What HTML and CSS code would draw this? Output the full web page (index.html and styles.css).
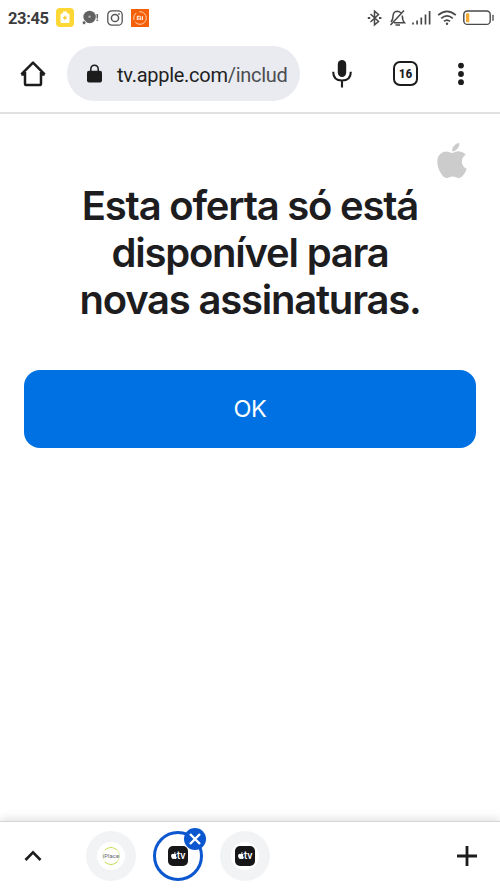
FILE: index.html
```html
<!DOCTYPE html>
<html lang="pt-BR">
<head>
    <meta charset="UTF-8">
    <meta name="viewport" content="width=device-width, initial-scale=1.0">
    <title>Apple TV</title>
    <link rel="stylesheet" href="styles.css">
</head>
<body>
    <svg class="symbols" width="0" height="0">
        <symbol id="apple" viewBox="4 32 376 448">
            <path d="M318.7 268.7c-.2-36.7 16.4-64.4 50-84.8-18.8-26.9-47.2-41.7-84.7-44.6-35.5-2.8-74.3 20.7-88.5 20.7-15 0-49.4-19.7-76.4-19.7C63.3 141.2 4 184.8 4 273.5q0 39.3 14.4 81.2c12.8 36.7 59 126.7 107.2 125.2 25.2-.6 43-17.9 75.8-17.9 31.8 0 48.3 17.9 76.4 17.9 48.6-.7 90.4-82.5 102.6-119.3-65.2-30.7-61.7-90-61.7-91.9zm-56.6-164.2c27.3-32.4 24.8-61.9 24-72.5-24.1 1.4-52 16.4-67.9 34.9-17.5 19.8-27.8 44.3-25.6 71.9 26.1 2 49.9-11.4 69.5-34.3z"/>
        </symbol>
    </svg>

    <div class="status-bar">
        <span class="clock">23:45</span>
        <div class="notifications">
            <svg width="18" height="19" viewBox="0 0 18 19">
                <rect width="18" height="19" rx="4" fill="#fdd733"/>
                <path d="M7 3.500h4v1.900h1.500q1 0 1 1v7.500q0 1-1 1h-7q-1 0-1-1V6.400q0-1 1-1H7z" fill="#fff"/>
                <path d="M9 7.800v4M7 9.800h4" stroke="#f5ca26" stroke-width="1.300"/>
            </svg>
            <svg width="17" height="16" viewBox="0 0 17 16">
                <circle cx="7.600" cy="7" r="6.200" fill="#626262"/>
                <circle cx="7.600" cy="6.800" r="1.300" fill="#aaa"/>
                <circle cx="2.100" cy="12.700" r="1.900" fill="#626262" stroke="#fff" stroke-width=".8"/>
                <path d="M15.300 4v4.400M15.300 9.600v1.500" stroke="#626262" stroke-width="1.500"/>
            </svg>
            <svg width="16" height="16" viewBox="0 0 16 16" fill="none" stroke="#555">
                <rect x=".8" y=".8" width="14.400" height="14.400" rx="4" stroke-width="1.300"/>
                <circle cx="8" cy="8" r="3.600" stroke-width="1.500"/>
                <circle cx="12" cy="4" r=".6" stroke-width=".8"/>
            </svg>
            <svg width="18" height="18" viewBox="0 0 18 18">
                <rect width="18" height="18" fill="#f45f08"/>
                <circle cx="9" cy="9" r="6.300" fill="none" stroke="#ffd4b5" stroke-width="1" stroke-dasharray="15 2 8 3"/>
                <path d="M6.300 11V7.300h2.400q1 0 1 1V11M8 8.700V11M11.400 7.200V11" fill="none" stroke="#fff" stroke-width="1"/>
            </svg>
        </div>
        <div class="system-icons">
            <svg width="16" height="18" viewBox="0 0 16 18" fill="none" stroke="#484848" stroke-width="1.500">
                <path d="M3.500 5l8 7.500L7.500 15.800V2.200l4 3.300-8 7.500"/>
                <path d="M.8 9h2.400M12 9h2.400" stroke-width="2"/>
            </svg>
            <svg width="17" height="18" viewBox="0 0 17 18" fill="none" stroke="#484848" stroke-width="1.500">
                <path d="M11.800 3.700Q10.300 2.200 8.200 2.200 4 2.500 4 7.300q0 3.200-2 5.700M5 13.700h10.500q-2.200-2.200-2.200-7.200M6.500 16h4.500M15 1.500L1.500 16"/>
            </svg>
            <svg width="19" height="16" viewBox="0 0 19 16" stroke="#484848" stroke-width="1.700">
                <path d="M1 12.500v2M5.100 10.500v4M9.300 7.500v7M13.500 4.500v10M17.600 1v13.500"/>
            </svg>
            <svg width="20" height="16" viewBox="0 0 20 16" fill="none" stroke="#484848" stroke-width="1.700">
                <path d="M1.200 5.200q8.800-7.600 17.600 0M4.200 8.400q5.800-5 11.600 0M7 11.400q3-2.600 6 0"/>
                <circle cx="10" cy="13.700" r="1.200" fill="#484848" stroke="none"/>
            </svg>
            <svg width="31" height="16" viewBox="0 0 31 16">
                <rect x=".8" y="1" width="26.400" height="13.400" rx="3.500" fill="none" stroke="#484848" stroke-width="1.400"/>
                <rect x="3" y="3.200" width="3.300" height="9" rx="1" fill="#f5ab32"/>
                <path d="M30 4.800v6" stroke="#484848" stroke-width="1.300"/>
            </svg>
        </div>
    </div>

    <header class="toolbar">
        <svg class="home" width="26" height="26" viewBox="0 0 26 26" fill="none" stroke="#1c1c1c" stroke-width="2.500" stroke-linejoin="round">
            <path d="M1.300 13.400L13 1.700l11.700 11.700M5 11v11.500q0 1.600 1.600 1.600h12.800q1.600 0 1.600-1.600V11M1.300 13.400H5M21 13.400h3.700"/>
        </svg>
        <div class="address">
            <svg width="15" height="19" viewBox="0 0 15 19">
                <path d="M3.800 8V5Q4 1.200 7.500 1.200T11.200 5v3" fill="none" stroke="#1c1c1c" stroke-width="1.500"/>
                <rect y="6.700" width="15" height="11.800" rx="2" fill="#1c1c1c"/>
            </svg>
            <span class="url">tv.apple.com<span class="path">/includ</span></span>
        </div>
        <svg class="mic" width="20" height="28" viewBox="0 0 20 28">
            <rect x="5.800" width="8.400" height="17" rx="4.200" fill="#1c1c1c"/>
            <path d="M1.200 11.700q0 8.800 8.800 8.800t8.800-8.800M10 20.500V27.500" fill="none" stroke="#1c1c1c" stroke-width="2.100"/>
        </svg>
        <span class="tab-count">16</span>
        <svg class="menu" width="6" height="24" viewBox="0 0 6 24" fill="#1c1c1c">
            <circle cx="3" cy="3.600" r="2.900"/>
            <circle cx="3" cy="12" r="2.900"/>
            <circle cx="3" cy="20.200" r="2.900"/>
        </svg>
    </header>

    <main>
        <svg class="apple-logo"><use href="#apple"/></svg>
        <h1>Esta oferta só está<br>disponível para<br>novas assinaturas.</h1>
        <button type="button" class="btn">OK</button>
    </main>

    <footer class="tab-strip">
        <svg class="chevron" width="18" height="12" viewBox="0 0 18 12" fill="none" stroke="#1c1c1c" stroke-width="2.600">
            <path d="M1.500 10L9 2.300l7.500 7.700"/>
        </svg>
        <div class="tabs">
            <div class="tab">
                <div class="favicon iplace"><span>iPlace</span></div>
            </div>
            <div class="tab active">
                <div class="favicon"><div class="tv"><svg><use href="#apple"/></svg>tv</div></div>
                <span class="close">
                    <svg width="12" height="12" viewBox="0 0 12 12" stroke="#fff" stroke-width="2.400">
                        <path d="M1 1l10 10M11 1L1 11"/>
                    </svg>
                </span>
            </div>
            <div class="tab">
                <div class="favicon"><div class="tv"><svg><use href="#apple"/></svg>tv</div></div>
            </div>
        </div>
        <svg class="plus" width="20" height="20" viewBox="0 0 20 20" stroke="#1c1c1c" stroke-width="2.800">
            <path d="M10 0v20M0 10h20"/>
        </svg>
    </footer>
</body>
</html>
```
FILE: styles.css
```css
/* Global Styles */
* {
    box-sizing: border-box;
}

body {
    font-family: Roboto, "Liberation Sans", sans-serif;
    margin: 0;
    height: 889px;
    display: flex;
    flex-direction: column;
    background-color: #fff;
    color: #1d1d1f;
    overflow: hidden;
}

svg {
    display: block;
    flex: none;
}

.symbols {
    position: absolute;
}

/* Status Bar */
.status-bar {
    height: 35px;
    padding: 0 6px 0 8px;
    display: flex;
    align-items: center;
}

.clock {
    width: 48px;
    padding-top: 1px;
    font-size: 16.5px;
    font-weight: 700;
    letter-spacing: -0.4px;
    color: #3c3c3c;
}

.notifications {
    display: flex;
    align-items: center;
    gap: 8px;
}

.system-icons {
    display: flex;
    align-items: center;
    gap: 6px;
    margin-left: auto;
}

/* Browser Toolbar */
.toolbar {
    height: 79px;
    padding: 0 36px 0 20px;
    display: flex;
    align-items: center;
    border-bottom: 2px solid #e1e1e2;
}

.address {
    width: 233px;
    height: 55px;
    margin: 0 32px 0 21px;
    padding-left: 20px;
    display: flex;
    align-items: center;
    gap: 15px;
    border-radius: 28px;
    background-color: #e9ebf0;
}

.url {
    padding-top: 2px;
    font-size: 20px;
    letter-spacing: -0.27px;
    white-space: nowrap;
    color: #1f1f1f;
}

.path {
    color: #4c4d50;
}

.tab-count {
    width: 25px;
    height: 25px;
    margin: 0 40px 0 41px;
    border: 2.5px solid #1c1c1c;
    border-radius: 7px;
    font-family: "Roboto Condensed", Roboto, sans-serif;
    font-size: 13.5px;
    font-weight: 700;
    line-height: 21px;
    text-align: center;
}

/* Main Content */
main {
    flex: 1;
    padding: 29px 24px 0;
    display: flex;
    flex-direction: column;
}

.apple-logo {
    width: 30px;
    height: 35px;
    margin-right: 9px;
    align-self: flex-end;
    fill: #ccc;
}

h1 {
    margin: 4px 0 0;
    font-family: Inter, "Liberation Sans", sans-serif;
    font-size: 40px;
    font-weight: 600;
    line-height: 47px;
    letter-spacing: -1.22px;
    text-align: center;
    white-space: nowrap;
}

.btn {
    height: 78px;
    margin-top: 47px;
    padding: 0 0 2px;
    border: none;
    border-radius: 16px;
    background-color: #0071e3;
    color: #fff;
    font-family: Inter, "Liberation Sans", sans-serif;
    font-size: 23.5px;
    letter-spacing: -0.5px;
}

/* Tab Strip */
.tab-strip {
    height: 68px;
    padding: 0 23px 0 24px;
    display: flex;
    align-items: center;
    border-top: 1px solid #d5d5d5;
    box-shadow: 0 -2px 9px rgba(0, 0, 0, 0.13);
    background-color: #fff;
}

.tabs {
    display: flex;
    gap: 17px;
    margin-left: 44px;
}

.tab {
    position: relative;
    width: 50px;
    height: 50px;
    display: flex;
    align-items: center;
    justify-content: center;
    border-radius: 50%;
    background-color: #f1f3f5;
}

.tab.active {
    border: 3px solid #0b57d0;
    background-color: #fff;
}

.favicon {
    width: 28px;
    height: 28px;
    display: flex;
    align-items: center;
    justify-content: center;
    border-radius: 50%;
    background-color: #fff;
}

.iplace span {
    width: 18px;
    height: 18px;
    display: flex;
    align-items: center;
    justify-content: center;
    border: 1.5px solid #c3d94e;
    border-left-color: #f1f6d2;
    border-right-color: #e3edab;
    border-radius: 50%;
    font-size: 6px;
    color: #63676f;
}

.tv {
    width: 20px;
    height: 20px;
    display: flex;
    align-items: center;
    justify-content: center;
    border-radius: 5px;
    background-color: #171719;
    color: #fff;
    font-size: 10.5px;
    font-weight: 500;
}

.tv svg {
    width: 6px;
    height: 7px;
    fill: #fff;
}

.close {
    position: absolute;
    top: -6px;
    right: -6px;
    width: 22px;
    height: 22px;
    display: flex;
    align-items: center;
    justify-content: center;
    border-radius: 50%;
    background-color: #0b57d0;
}

.plus {
    margin-left: auto;
}
```
